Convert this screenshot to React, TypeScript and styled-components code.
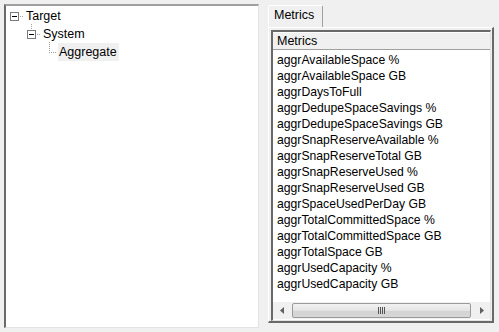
import styled, { createGlobalStyle } from "styled-components";

const Global = createGlobalStyle`
  html, body {
    margin: 0;
    background: #f0f0f0;
    font-family: "Liberation Sans", Arial, sans-serif;
    font-size: 12px;
    color: #000;
  }
`;

const Page = styled.div`
  display: flex;
  padding: 4px;
  gap: 9px;
  width: 499px;
  height: 332px;
  box-sizing: border-box;
`;

const TreePanel = styled.div`
  width: 255px;
  height: 324px;
  box-sizing: border-box;
  background: #fff;
  border-top: 2px solid #a0a0a0;
  border-left: 2px solid #696969;
  border-right: 1px solid #e3e3e3;
  border-bottom: 1px solid #e3e3e3;
  padding: 1px 0 0 3px;
`;

const TreeRow = styled.div<{ $indent: number }>`
  position: relative;
  display: flex;
  align-items: center;
  height: 18px;
  padding-left: ${(p) => p.$indent}px;
`;

const ExpandBox = styled.span`
  position: relative;
  width: 7px;
  height: 7px;
  border: 1px solid #7a7a7a;
  background: #fff;
  flex: none;
  &::after {
    content: "";
    position: absolute;
    left: 1px;
    top: 3px;
    width: 5px;
    height: 1px;
    background: #000;
  }
`;

const HDots = styled.span<{ $w: number }>`
  width: ${(p) => p.$w}px;
  height: 1px;
  margin: 0 1px;
  flex: none;
  background-image: linear-gradient(to right, #a0a0a0 50%, transparent 50%);
  background-size: 2px 1px;
`;

const VDots = styled.span<{ $left: number; $top: number; $h: number }>`
  position: absolute;
  left: ${(p) => p.$left}px;
  top: ${(p) => p.$top}px;
  width: 1px;
  height: ${(p) => p.$h}px;
  background-image: linear-gradient(to bottom, #a0a0a0 50%, transparent 50%);
  background-size: 1px 2px;
`;

const NodeLabel = styled.span<{ $selected?: boolean }>`
  font-size: 12.5px;
  padding: 0 2px 0 1px;
  line-height: 18px;
  background: ${(p) => (p.$selected ? "#f0f0f0" : "transparent")};
`;

const TabArea = styled.div`
  display: flex;
  flex-direction: column;
  width: 226px;
`;

const TabStrip = styled.div`
  display: flex;
  height: 23px;
  padding-top: 1px;
  box-sizing: border-box;
`;

const Tab = styled.div`
  height: 22px;
  box-sizing: border-box;
  padding: 0 5px 3px;
  display: flex;
  align-items: center;
  font-size: 12.5px;
  background: #f0f0f0;
  border: 1px solid #fff;
  border-right: 1px solid #a0a0a0;
  border-bottom: none;
  border-radius: 2px 2px 0 0;
  position: relative;
  z-index: 1;
  width: 55px;
`;

const TabPanel = styled.div`
  height: 296px;
  box-sizing: border-box;
  border-top: 1px solid #fff;
  border-left: 1px solid #fff;
  border-right: 2px solid #696969;
  border-bottom: 2px solid #696969;
  padding: 2px 1px 0 2px;
`;

const ListBox = styled.div`
  height: 291px;
  box-sizing: border-box;
  background: #fff;
  border-top: 2px solid #696969;
  border-left: 2px solid #696969;
  border-right: 1px solid #e3e3e3;
  border-bottom: 1px solid #e3e3e3;
  display: flex;
  flex-direction: column;
`;

const Header = styled.div`
  height: 18px;
  box-sizing: border-box;
  background: #f0f0f0;
  border-bottom: 1px solid #a0a0a0;
  border-top: 1px solid #fff;
  padding-left: 4px;
  display: flex;
  align-items: center;
  font-size: 12.5px;
`;

const Rows = styled.div`
  flex: 1;
  padding-top: 2px;
`;

const Row = styled.div`
  height: 16px;
  line-height: 16px;
  padding-left: 4px;
  font-size: 12.2px;
  white-space: nowrap;
`;

const ScrollBar = styled.div`
  height: 17px;
  display: flex;
  align-items: center;
  background: #f0f0f0;
  margin-bottom: 1px;
`;

const Arrow = styled.div`
  width: 17px;
  height: 17px;
  display: flex;
  align-items: center;
  justify-content: center;
  flex: none;
`;

const Thumb = styled.div`
  flex: 1;
  height: 15px;
  box-sizing: border-box;
  margin: 0 2px;
  border: 1px solid #9a9a9a;
  border-radius: 2px;
  background: linear-gradient(to bottom, #f2f2f2 0%, #e4e4e4 50%, #d3d3d3 51%, #d7d7d7 100%);
  display: flex;
  align-items: center;
  justify-content: center;
`;

const Grip = styled.span`
  width: 7px;
  height: 7px;
  background-image: linear-gradient(to right, #555 1px, transparent 1px);
  background-size: 2px 7px;
`;

const metrics = [
  "aggrAvailableSpace %",
  "aggrAvailableSpace GB",
  "aggrDaysToFull",
  "aggrDedupeSpaceSavings %",
  "aggrDedupeSpaceSavings GB",
  "aggrSnapReserveAvailable %",
  "aggrSnapReserveTotal GB",
  "aggrSnapReserveUsed %",
  "aggrSnapReserveUsed GB",
  "aggrSpaceUsedPerDay GB",
  "aggrTotalCommittedSpace %",
  "aggrTotalCommittedSpace GB",
  "aggrTotalSpace GB",
  "aggrUsedCapacity %",
  "aggrUsedCapacity GB",
];

const App = () => {
  return (
    <>
      <Global />
      <Page>
        <TreePanel>
          <TreeRow $indent={1}>
            <ExpandBox />
            <HDots $w={4} />
            <NodeLabel>Target</NodeLabel>
          </TreeRow>
          <TreeRow $indent={18}>
            <VDots $left={22} $top={-1} $h={5} />
            <ExpandBox />
            <HDots $w={4} />
            <NodeLabel>System</NodeLabel>
          </TreeRow>
          <TreeRow $indent={39}>
            <VDots $left={40} $top={-1} $h={10} />
            <HDots $w={8} />
            <NodeLabel $selected>Aggregate</NodeLabel>
          </TreeRow>
        </TreePanel>
        <TabArea>
          <TabStrip>
            <Tab>Metrics</Tab>
          </TabStrip>
          <TabPanel>
            <ListBox>
              <Header>Metrics</Header>
              <Rows>
                {metrics.map((m) => (
                  <Row key={m}>{m}</Row>
                ))}
              </Rows>
              <ScrollBar>
                <Arrow>
                  <svg width="4" height="7" viewBox="0 0 4 7">
                    <path d="M4 0 L0 3.5 L4 7 Z" fill="#606060" />
                  </svg>
                </Arrow>
                <Thumb>
                  <Grip />
                </Thumb>
                <Arrow>
                  <svg width="4" height="7" viewBox="0 0 4 7">
                    <path d="M0 0 L4 3.5 L0 7 Z" fill="#606060" />
                  </svg>
                </Arrow>
              </ScrollBar>
            </ListBox>
          </TabPanel>
        </TabArea>
      </Page>
    </>
  );
};

export default App;
